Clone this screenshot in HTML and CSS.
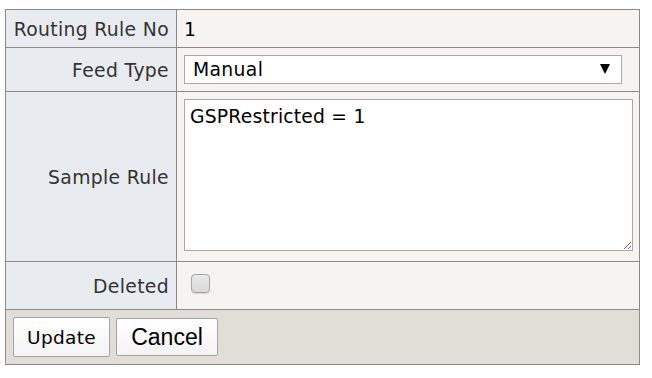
FILE: index.html
```html
<!DOCTYPE html>
<html>
<head>
<meta charset="utf-8">
<link rel="stylesheet" href="styles.css">
</head>
<body>
<table class="form">
  <colgroup><col class="col-label"><col class="col-value"></colgroup>
  <tr class="row-no">
    <td class="label">Routing Rule No</td>
    <td class="value value-text">1</td>
  </tr>
  <tr class="row-feed">
    <td class="label">Feed Type</td>
    <td class="value">
      <div class="select-wrap">
        <select class="select"><option>Manual</option></select>
        <svg class="select-arrow" width="10" height="10" viewBox="0 0 10 10"><polygon points="0,0 10,0 5,10" fill="#000"/></svg>
      </div>
    </td>
  </tr>
  <tr class="row-rule">
    <td class="label">Sample Rule</td>
    <td class="value"><textarea class="rule">GSPRestricted = 1</textarea></td>
  </tr>
  <tr class="row-del">
    <td class="label">Deleted</td>
    <td class="value"><input type="checkbox" class="check"></td>
  </tr>
  <tr class="row-actions">
    <td colspan="2" class="actions">
      <div class="buttons">
        <button class="btn btn-update">Update</button>
        <button class="btn btn-cancel">Cancel</button>
      </div>
    </td>
  </tr>
</table>
</body>
</html>
```

FILE: styles.css
```css
html, body {
  margin: 0;
  padding: 0;
  background: #fff;
}
body {
  padding: 9px 0 0 5px;
  font-family: "DejaVu Sans", Verdana, sans-serif;
  font-size: 18.75px;
  letter-spacing: 0.35px;
}
.form {
  border-collapse: collapse;
  table-layout: fixed;
  width: 635px;
  border: 1px solid #8a8a8a;
}
.col-label { width: 171px; }
.form td {
  border: 1px solid #8a8a8a;
  padding: 0;
  vertical-align: middle;
}
.label {
  background: #e8ecf1;
  color: #333;
  text-align: right;
  padding: 2px 7px 0 0 !important;
  white-space: nowrap;
}
.value {
  background: #f5f4f0;
  color: #000;
  padding-left: 7px !important;
  padding-right: 6px !important;
}
.value-text {
  padding-top: 2px !important;
}
.row-no .value { height: 35px; }
.row-feed .value { height: 43px; }
.row-rule .value { height: 169px; }
.row-del .value { height: 47px; }
.row-actions td { height: 54px; }
.select-wrap {
  position: relative;
  width: 438px;
  height: 29px;
}
.select {
  -webkit-appearance: none;
  appearance: none;
  box-sizing: border-box;
  width: 438px;
  height: 29px;
  margin: 0;
  border: 1px solid #a9a9a9;
  border-radius: 0;
  background: #fff;
  font-family: "DejaVu Sans", Verdana, sans-serif;
  font-size: 18.75px;
  letter-spacing: 0.35px;
  color: #000;
  padding: 0 0 0 8px;
}
.select-arrow {
  position: absolute;
  right: 12px;
  top: 9px;
  pointer-events: none;
}
.rule {
  display: block;
  box-sizing: border-box;
  width: 449px;
  height: 152px;
  margin: 0 0 3px 0;
  border: 1px solid #a9a9a9;
  background: #fff;
  font-family: "DejaVu Sans", Verdana, sans-serif;
  font-size: 18.75px;
  letter-spacing: 0.2px;
  line-height: 22px;
  color: #000;
  padding: 6px 5px;
  resize: both;
}
.check {
  -webkit-appearance: none;
  appearance: none;
  box-sizing: border-box;
  display: block;
  width: 19px;
  height: 19px;
  margin: 0 0 4px 7px;
  border: 1px solid #a6a6a6;
  border-radius: 4px;
  background: linear-gradient(#e9e9e9, #d9d9d9);
  box-shadow: 0 1px 1px rgba(0,0,0,0.12);
}
.actions {
  background: #e1ddd7;
  padding-left: 7px !important;
}
.buttons {
  display: flex;
  align-items: center;
  gap: 6px;
}
.btn {
  box-sizing: border-box;
  margin: 0;
  border: 1px solid #a3a3a3;
  border-radius: 2px;
  background: linear-gradient(#ffffff, #f3f3f3);
  color: #000;
  padding: 0;
}
.btn-update {
  width: 97px;
  height: 40px;
  font-family: "DejaVu Sans", Verdana, sans-serif;
  font-size: 18.5px;
  letter-spacing: 0.3px;
}
.btn-cancel {
  width: 102px;
  height: 38px;
  font-family: "Liberation Sans", Arial, sans-serif;
  font-size: 23px;
}
```
